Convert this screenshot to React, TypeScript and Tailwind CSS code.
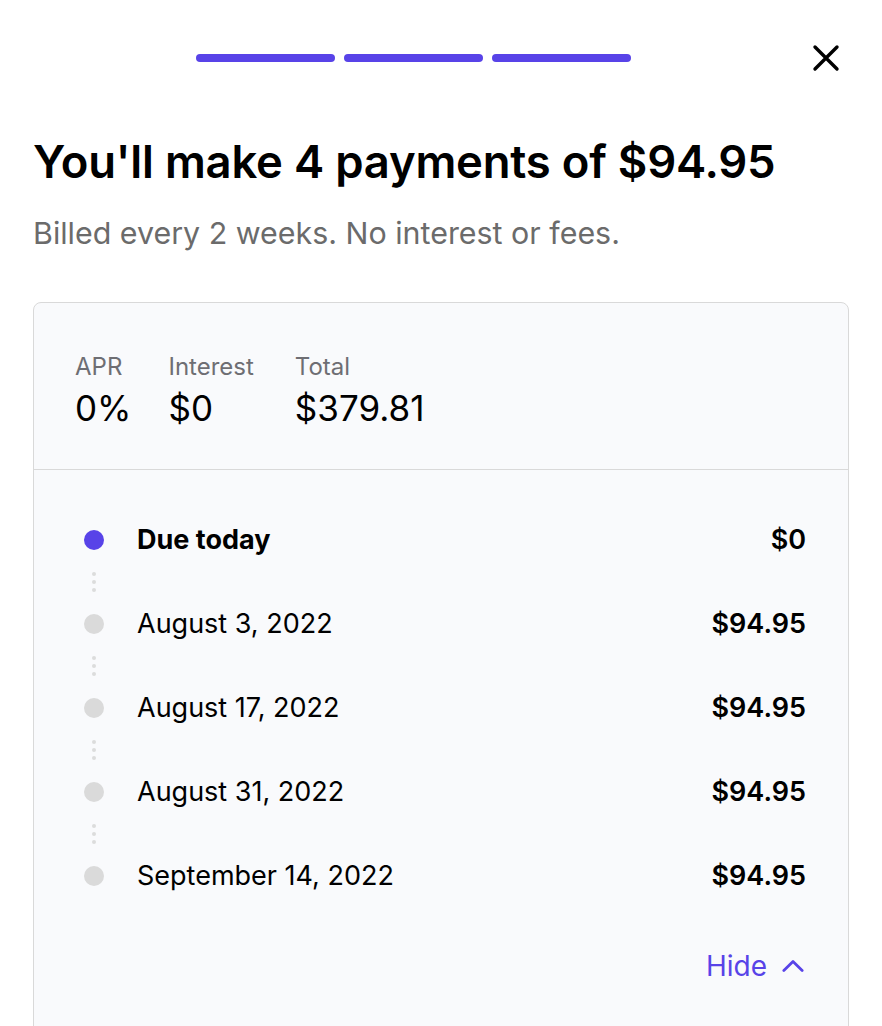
const schedule = [
  { date: 'Due today', amount: '$0', current: true },
  { date: 'August 3, 2022', amount: '$94.95' },
  { date: 'August 17, 2022', amount: '$94.95' },
  { date: 'August 31, 2022', amount: '$94.95' },
  { date: 'September 14, 2022', amount: '$94.95' },
];

function Connector() {
  return (
    <div className="flex h-[44px] w-[20px] flex-col items-center justify-center gap-[4px]">
      <span className="h-[4px] w-[4px] rounded-full bg-[#dcdcdc]" />
      <span className="h-[4px] w-[4px] rounded-full bg-[#dcdcdc]" />
      <span className="h-[4px] w-[4px] rounded-full bg-[#dcdcdc]" />
    </div>
  );
}

export default function App() {
  return (
    <div
      className="h-[1026px] w-[882px] overflow-hidden bg-white text-black"
      style={{ fontFamily: 'Inter, "Noto Sans", sans-serif' }}
    >
      {/* stepper + close */}
      <div className="flex items-center justify-between pl-[196px] pr-[42px] pt-[44px]">
        <div className="flex gap-[9px]">
          <span className="h-[8px] w-[139px] rounded-full bg-[#5843e8]" />
          <span className="h-[8px] w-[139px] rounded-full bg-[#5843e8]" />
          <span className="h-[8px] w-[139px] rounded-full bg-[#5843e8]" />
        </div>
        <button className="flex h-[28px] w-[28px] items-center justify-center" aria-label="Close">
          <svg viewBox="0 0 28 28" className="h-[28px] w-[28px]" fill="none" stroke="#000" strokeWidth="3.4" strokeLinecap="round">
            <path d="M3 3 L25 25 M25 3 L3 25" />
          </svg>
        </button>
      </div>

      <div className="px-[33px]">
        <h1 className="mt-[65px] text-[45.4px] font-semibold leading-[50px] tracking-[-0.2px]">
          You'll make 4 payments of $94.95
        </h1>
        <p className="mt-[28px] text-[30.4px] leading-[36px] text-[#6b6b6b]">
          Billed every 2 weeks. No interest or fees.
        </p>

        <div className="mt-[51px] rounded-t-[8px] border border-[#d9d9d9] bg-[#f9fafc]">
          <div className="flex border-b border-[#d9d9d9] pl-[41px] pt-[50px] pb-[41px]">
            <div>
              <div className="text-[24px] leading-[28px] text-[#6e6e73]">APR</div>
              <div className="mt-[7px] text-[35px] leading-[40px]">0%</div>
            </div>
            <div className="ml-[37px]">
              <div className="text-[24px] leading-[28px] text-[#6e6e73]">Interest</div>
              <div className="mt-[7px] text-[35px] leading-[40px]">$0</div>
            </div>
            <div className="ml-[41px]">
              <div className="text-[24px] leading-[28px] text-[#6e6e73]">Total</div>
              <div className="mt-[7px] text-[35px] leading-[40px]">$379.81</div>
            </div>
          </div>

          <div className="pl-[50px] pr-[42px] pt-[50px] pb-[60px]">
            {schedule.map((row, i) => (
              <div key={row.date}>
                {i > 0 && <Connector />}
                <div className="flex h-[40px] items-center">
                  <span
                    className={
                      row.current
                        ? 'h-[20px] w-[20px] shrink-0 rounded-full bg-[#5843e8]'
                        : 'h-[20px] w-[20px] shrink-0 rounded-full bg-[#dadada]'
                    }
                  />
                  <span
                    className={
                      row.current
                        ? 'ml-[33px] flex-1 text-[27px] font-bold'
                        : 'ml-[33px] flex-1 text-[27px]'
                    }
                  >
                    {row.date}
                  </span>
                  <span className="text-[27px] font-semibold">{row.amount}</span>
                </div>
              </div>
            ))}

            <div className="mt-[54px] mr-[2px] flex items-center justify-end gap-[15px]">
              <span className="text-[28px] leading-[32px] text-[#5843e8]">Hide</span>
              <svg viewBox="0 0 24 14" className="h-[14px] w-[22px]" fill="none" stroke="#5843e8" strokeWidth="3" strokeLinecap="round" strokeLinejoin="round">
                <path d="M2 12 L12 2 L22 12" />
              </svg>
            </div>
          </div>
        </div>
      </div>
    </div>
  );
}
